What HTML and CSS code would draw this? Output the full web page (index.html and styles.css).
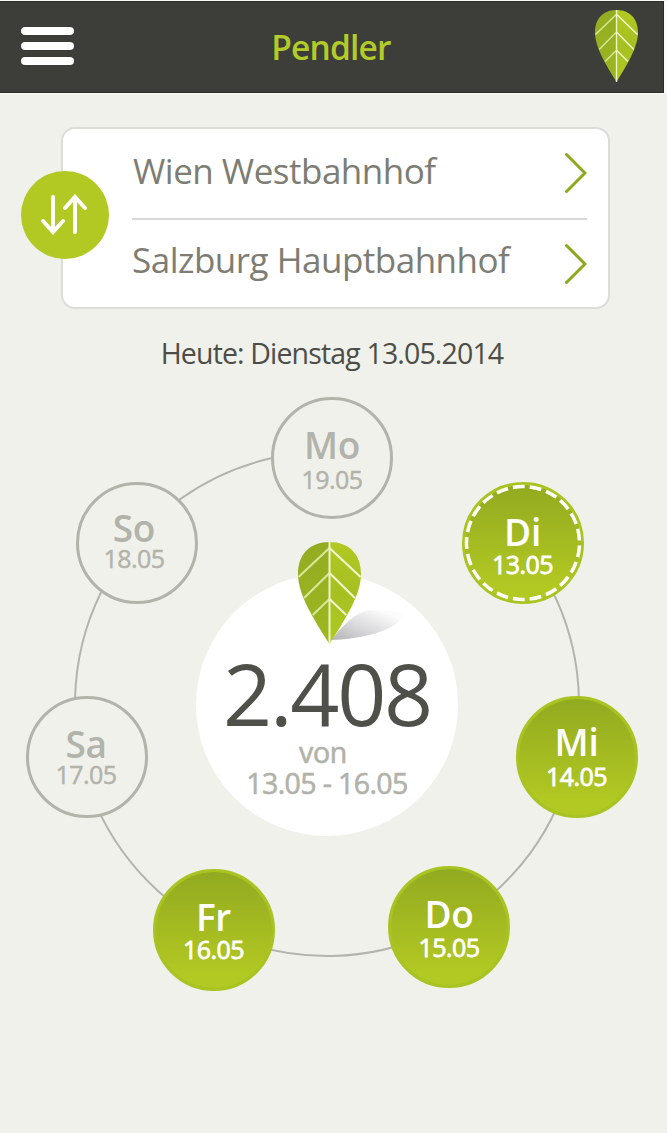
FILE: index.html
```html
<!DOCTYPE html>
<html lang="de">
<head>
<meta charset="utf-8">
<title>Pendler</title>
<link rel="stylesheet" href="styles.css">
</head>
<body>
<svg class="defs" aria-hidden="true">
  <defs>
    <linearGradient id="leafLeft" x1="0" y1="0" x2="0" y2="1"><stop offset="0" stop-color="#94ac22"/><stop offset="1" stop-color="#9bb821"/></linearGradient>
    <linearGradient id="leafRight" x1="0" y1="0" x2="0" y2="1"><stop offset="0" stop-color="#b2c922"/><stop offset=".5" stop-color="#a6c022"/><stop offset="1" stop-color="#b0ca20"/></linearGradient>
    <linearGradient id="shade" x1="0" y1="1" x2="1" y2="0"><stop offset="0" stop-color="#b4b4b6"/><stop offset=".45" stop-color="#dcdcde"/><stop offset=".85" stop-color="#fcfcfc"/></linearGradient>
    <symbol id="leaf" viewBox="0 0 62 102" preserveAspectRatio="none">
      <path fill="url(#leafLeft)" d="M31 0C12 0 0 12 0 32C0 53 16 78 31 102Z"/>
      <path fill="url(#leafRight)" d="M31 0C50 0 62 12 62 32C62 53 46 78 31 102Z"/>
      <path class="veins-left" d="M31 6L.5 35M31 31L6 56M31 57L14.500 73"/>
      <path class="veins-right" d="M31 6L61.500 35M31 31L56 56M31 57L47.500 73"/>
      <path class="stem" d="M31 0V102"/>
    </symbol>
  </defs>
</svg>

<header class="bar">
  <button class="menu" aria-label="Menü"><i></i><i></i><i></i></button>
  <h1 class="title">Pendler</h1>
  <svg class="logo"><use href="#leaf"/></svg>
</header>

<main>
  <section class="route">
    <div class="stop from"><span class="station">Wien Westbahnhof</span>
      <svg class="chevron" viewBox="0 0 24 42"><path d="M3.500 2.500L22 21L3.500 39.500"/></svg></div>
    <div class="stop to"><span class="station">Salzburg Hauptbahnhof</span>
      <svg class="chevron" viewBox="0 0 24 42"><path d="M3.500 2.500L22 21L3.500 39.500"/></svg></div>
    <button class="swap" aria-label="Tauschen">
      <svg viewBox="0 0 88 88"><path d="M32 26V61M22 50L32 61L42 50M54 61V26M44 37L54 26L64 37"/></svg>
    </button>
  </section>

  <p class="today">Heute: Dienstag 13.05.2014</p>

  <section class="wheel">
    <svg class="ring" viewBox="0 0 667 620"><path d="M272 62.100A252 252 0 1 0 545 181.600"/></svg>
    <div class="center">
      <strong class="count">2.408</strong>
      <span class="of">von</span>
      <span class="range">13.05 - 16.05</span>
    </div>
    <svg class="shadow" viewBox="0 0 76 34"><path fill="url(#shade)" d="M0 33C14 15 28 1 46 1C61 1 74 2 75 7C76 14 54 31 0 33Z"/></svg>
    <svg class="marker"><use href="#leaf"/></svg>

    <div class="day mo"><b>Mo</b><span>19.05</span></div>
    <div class="day active di"><svg class="dashes" viewBox="0 0 122 122"><circle cx="61" cy="61" r="56.500" pathLength="210"/></svg><b>Di</b><span>13.05</span></div>
    <div class="day active mi"><b>Mi</b><span>14.05</span></div>
    <div class="day active do"><b>Do</b><span>15.05</span></div>
    <div class="day active fr"><b>Fr</b><span>16.05</span></div>
    <div class="day sa"><b>Sa</b><span>17.05</span></div>
    <div class="day so"><b>So</b><span>18.05</span></div>
  </section>
</main>
</body>
</html>
```

FILE: styles.css
```css
* { box-sizing: border-box; }
body {
  margin: 0;
  height: 1133px;
  overflow: hidden;
  background: #f0f1eb;
  font-family: "Open Sans", "Noto Sans", sans-serif;
}
button { padding: 0; border: 0; background: none; }
.defs { display: block; width: 0; height: 0; }
.veins-left, .veins-right, .stem { fill: none; stroke: #eef4c4; stroke-width: 2; }
.veins-left { stroke: #d9e79a; }
.veins-right { stroke: #f1f6cf; }

.bar {
  display: grid;
  grid-template-columns: 80px 1fr 80px;
  align-items: center;
  width: 664px;
  height: 92px;
  margin-top: 1px;
  background: #3d3d39;
  border: solid #2b2c28;
  border-width: 1px 1px 1px 0;
  box-shadow: 0 0 0 1px #fbfcf8, 3px 0 0 #fbfcf8;
}
.menu { display: flex; flex-direction: column; gap: 7px; width: 53px; margin-left: 21px; margin-top: -2px; }
.menu i { height: 8px; border-radius: 4px; background: #fff; box-shadow: 0 0 1px #222; }
.title {
  margin: 0 0 0 -1px;
  color: #b3cb28;
  font-size: 33.500px;
  line-height: 46px;
  font-weight: 600;
  letter-spacing: -.8px;
  text-align: center;
}
.logo { width: 43px; height: 72px; margin: -2px 0 0 12px; }

.route {
  position: relative;
  width: 549px;
  height: 182px;
  margin: 34px 0 0 61px;
  padding: 0 21px 0 69px;
  background: #fff;
  border: 2px solid #dcddd9;
  border-radius: 14px;
}
.stop { display: flex; justify-content: space-between; align-items: center; height: 90px; }
.from { height: 91px; border-bottom: 2px solid #d8d8d8; }
.station { color: #7d7d74; font-size: 35px; line-height: 48px; font-weight: 400; letter-spacing: -.5px; white-space: nowrap; }
.from .station { margin: -6px 0 0 1px; }
.from .chevron { margin-top: -2px; }
.to .station { margin-top: -10px; }
.to .chevron { margin-top: -2px; }
.chevron { width: 24px; height: 42px; }
.chevron path { fill: none; stroke: #8ca91b; stroke-width: 3; stroke-linecap: round; stroke-linejoin: miter; }
.swap { position: absolute; left: -42px; top: 42px; width: 88px; height: 88px; border-radius: 50%; background: #b2c823; }
.swap svg { display: block; width: 88px; height: 88px; }
.swap path { fill: none; stroke: #fff; stroke-width: 4; stroke-linecap: round; }

.today {
  margin: 24px 0 0 -3px;
  color: #4c4d47;
  font-size: 28.500px;
  line-height: 40px;
  letter-spacing: -.850px;
  text-align: center;
}

.wheel { position: relative; height: 620px; margin-top: 23px; }
.ring { position: absolute; left: 0; top: 0; width: 667px; height: 620px; }
.ring path { fill: none; stroke: #b3b4ad; stroke-width: 2; }

.center {
  position: absolute;
  left: 196px;
  top: 178px;
  width: 262px;
  height: 262px;
  display: flex;
  flex-direction: column;
  align-items: center;
  padding-top: 76px;
  border-radius: 50%;
  background: #fff;
  color: #b1b2aa;
  white-space: nowrap;
}
.count { color: #4f504a; font-size: 86px; line-height: 86px; font-weight: 400; letter-spacing: -2.300px; }
.of { margin: 0 0 0 -8px; font-size: 28.500px; line-height: 32px; letter-spacing: -.3px; -webkit-text-stroke: .6px; }
.range { font-size: 28.500px; line-height: 31px; letter-spacing: -.6px; -webkit-text-stroke: .6px; }
.marker { position: absolute; left: 298px; top: 145.500px; width: 63px; height: 102px; }
.shadow { position: absolute; left: 330px; top: 213px; width: 74px; height: 32px; }

.day {
  position: absolute;
  display: flex;
  flex-direction: column;
  align-items: center;
  width: 122px;
  height: 122px;
  border: 3px solid #b2b3ab;
  border-radius: 50%;
  background: #f0f1eb;
  color: #b2b3ab;
  white-space: nowrap;
}
.day b { font-size: 37px; line-height: 37px; font-weight: 600; letter-spacing: -.3px; }
.day span { font-size: 25px; line-height: 26px; letter-spacing: -.55px; -webkit-text-stroke: .5px; }
.active { border-color: #a9c422; background: linear-gradient(#92aa20, #b3c923 90%) padding-box, #a9c422; color: #fff; }
.active span { -webkit-text-stroke: .8px; }
.dashes { position: absolute; left: -3px; top: -3px; width: 122px; height: 122px; }
.dashes circle { fill: none; stroke: #fff; stroke-width: 3.500; stroke-dasharray: 7 3; stroke-dashoffset: -1.500; }

.mo { left: 271px; top: 1px; padding-top: 26px; }
.mo span { margin-top: 3px; }
.so { left: 75.500px; top: 86px; padding: 24px 5px 0 0; }
.so span { margin-top: -1px; }
.sa { left: 26px; top: 299.500px; padding: 26.500px 2px 0 0; }
.sa span { margin-top: -1px; }
.di { left: 461.500px; top: 86px; padding: 28px 0 0 0; }
.di span { margin-top: 1px; }
.mi { left: 515.500px; top: 299.500px; padding-top: 24.500px; }
.mi span { margin-top: 3px; }
.do { left: 388px; top: 470px; padding-top: 26px; }
.do span { margin-top: 2px; }
.fr { left: 152.500px; top: 472.500px; padding-top: 26px; }
.fr span { margin-top: 1px; }
```
